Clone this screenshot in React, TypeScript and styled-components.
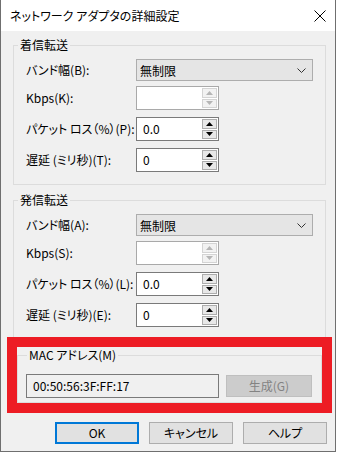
import React, { FC } from 'react';
import styled, { createGlobalStyle } from 'styled-components';

const GlobalStyle = createGlobalStyle`
  body {
    margin: 0;
    background: #ffffff;
    font-family: "Noto Sans CJK JP", "Noto Sans", sans-serif;
    font-size: 12px;
    font-feature-settings: "palt";
    color: #000000;
  }
`;

const Dialog = styled.div`
  width: 336px;
  height: 452px;
  box-sizing: border-box;
  border: 1px solid #6f6f6f;
  border-top: none;
  display: flex;
  flex-direction: column;
  background: #f0f0f0;
`;

const TitleBar = styled.div`
  height: 31px;
  flex-shrink: 0;
  background: #ffffff;
  display: flex;
  align-items: center;
  justify-content: space-between;
  padding: 0 9px 0 9px;
`;

const Title = styled.span`
  font-size: 12px;
  line-height: 16px;
`;

const Body = styled.div`
  flex: 1;
  padding: 6px 9px 0 12px;
  display: flex;
  flex-direction: column;
`;

const Group = styled.fieldset<{ $gap?: number; $bottom?: number }>`
  margin: ${p => p.$gap ?? 0}px 0 0;
  padding: 0 0 ${p => p.$bottom ?? 12}px;
  border: 1px solid #dcdcdc;
  min-width: 0;
`;

const Legend = styled.legend<{ $indent?: number }>`
  margin-left: ${p => p.$indent ?? 4}px;
  padding: 0 2px;
  line-height: 16px;
  font-size: 12px;
`;

const Rows = styled.div`
  padding: 6px 0 0 12px;
  display: flex;
  flex-direction: column;
`;

const Row = styled.div<{ $top?: number }>`
  display: flex;
  align-items: center;
  margin-top: ${p => p.$top ?? 0}px;
`;

const Label = styled.span`
  width: 110px;
  flex-shrink: 0;
  line-height: 16px;
`;

const Select = styled.div`
  width: 177px;
  height: 22px;
  box-sizing: border-box;
  background: #e5e5e5;
  border: 1px solid #adadad;
  display: flex;
  align-items: center;
  justify-content: space-between;
  padding: 0 6px 0 3px;
`;

const SpinBox = styled.div<{ $disabled?: boolean }>`
  width: 83px;
  height: 24px;
  box-sizing: border-box;
  background: #ffffff;
  border: 1px solid ${p => (p.$disabled ? '#a9a9a9' : '#7a7a7a')};
  display: flex;
  align-items: stretch;
`;

const SpinValue = styled.span`
  flex: 1;
  padding-left: 6px;
  line-height: 21px;
`;

const SpinButtons = styled.div`
  width: 15px;
  padding: 1px 1px 1px 0;
  display: flex;
  flex-direction: column;
  gap: 1px;
`;

const SpinButton = styled.div<{ $disabled?: boolean }>`
  flex: 1;
  box-sizing: border-box;
  border: 1px solid ${p => (p.$disabled ? '#d4d4d4' : '#adadad')};
  background: ${p => (p.$disabled ? '#f2f2f2' : '#e8e8e8')};
  display: flex;
  align-items: center;
  justify-content: center;
`;

const Highlight = styled.div`
  position: relative;
  margin: -1px -6px 0;
  height: 76px;
  box-sizing: border-box;
  border: 10px solid #ed1c24;
  background: #f0f0f0;
`;

const MacGroup = styled.fieldset`
  margin: 0;
  padding: 6px 0 0 8px;
  height: 56px;
  box-sizing: border-box;
  border: 1px solid #dcdcdc;
  display: flex;
  align-items: center;
  gap: 7px;
  min-width: 0;
`;

const MacField = styled.div`
  width: 193px;
  height: 24px;
  box-sizing: border-box;
  border: 1px solid #7a7a7a;
  background: #f0f0f0;
  padding-left: 6px;
  line-height: 21px;
`;

const Button = styled.div<{ $primary?: boolean; $disabled?: boolean; $width?: number }>`
  width: ${p => p.$width ?? 84}px;
  height: 22px;
  box-sizing: border-box;
  display: flex;
  align-items: center;
  justify-content: center;
  background: ${p => (p.$disabled ? '#cccccc' : '#e1e1e1')};
  border: ${p => (p.$primary ? '2px solid #0078d7' : `1px solid ${p.$disabled ? '#bfbfbf' : '#adadad'}`)};
  color: ${p => (p.$disabled ? '#838383' : '#000000')};
  line-height: 16px;
`;

const ButtonBar = styled.div`
  margin: 9px -1px 0 0;
  display: flex;
  justify-content: flex-end;
  gap: 10px;
`;

const Arrow: FC<{ up?: boolean; disabled?: boolean }> = ({ up, disabled }) => (
  <svg width="7" height="4" viewBox="0 0 7 4">
    <path d={up ? 'M0 4 L3.5 0 L7 4 Z' : 'M0 0 L3.5 4 L7 0 Z'} fill={disabled ? '#b5b5b5' : '#000000'} />
  </svg>
);

const Spin: FC<{ value?: string; disabled?: boolean }> = ({ value, disabled }) => (
  <SpinBox $disabled={disabled}>
    <SpinValue>{value}</SpinValue>
    <SpinButtons>
      <SpinButton $disabled={disabled}><Arrow up disabled={disabled} /></SpinButton>
      <SpinButton $disabled={disabled}><Arrow disabled={disabled} /></SpinButton>
    </SpinButtons>
  </SpinBox>
);

const Chevron = () => (
  <svg width="9" height="5" viewBox="0 0 9 5">
    <path d="M0.5 0.5 L4.5 4.5 L8.5 0.5" fill="none" stroke="#333333" strokeWidth="1" />
  </svg>
);

const CloseIcon = () => (
  <svg width="12" height="12" viewBox="0 0 12 12">
    <path d="M0.5 0.5 L11.5 11.5 M11.5 0.5 L0.5 11.5" stroke="#000000" strokeWidth="1" />
  </svg>
);

interface TransferProps {
  title: string;
  keys: [string, string, string, string];
  gap?: number;
  bottom?: number;
}

const TransferGroup: FC<TransferProps> = ({ title, keys, gap, bottom }) => (
  <Group $gap={gap} $bottom={bottom}>
    <Legend>{title}</Legend>
    <Rows>
      <Row>
        <Label>バンド幅({keys[0]}):</Label>
        <Select>
          <span>無制限</span>
          <Chevron />
        </Select>
      </Row>
      <Row $top={5}>
        <Label>Kbps({keys[1]}):</Label>
        <Spin disabled />
      </Row>
      <Row $top={7}>
        <Label>パケット ロス（%）({keys[2]}):</Label>
        <Spin value="0.0" />
      </Row>
      <Row $top={7}>
        <Label>遅延 (ミリ秒)({keys[3]}):</Label>
        <Spin value="0" />
      </Row>
    </Rows>
  </Group>
);

const App: FC = () => (
  <>
    <GlobalStyle />
    <Dialog>
      <TitleBar>
        <Title>ネットワーク アダプタの詳細設定</Title>
        <CloseIcon />
      </TitleBar>
      <Body>
        <TransferGroup title="着信転送" keys={['B', 'K', 'P', 'T']} />
        <TransferGroup title="発信転送" keys={['A', 'S', 'L', 'E']} gap={7} bottom={10} />
        <Highlight>
          <MacGroup>
            <Legend $indent={1}>MAC アドレス(M)</Legend>
            <MacField>00:50:56:3F:FF:17</MacField>
            <Button $disabled $width={86}>生成(G)</Button>
          </MacGroup>
        </Highlight>
        <ButtonBar>
          <Button $primary>OK</Button>
          <Button>キャンセル</Button>
          <Button>ヘルプ</Button>
        </ButtonBar>
      </Body>
    </Dialog>
  </>
);

export default App;
